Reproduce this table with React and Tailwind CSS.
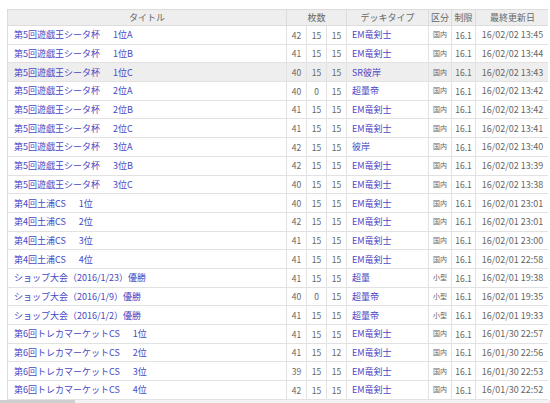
import React from 'react';

const rows = [
  ['第5回遊戯王シータ杯　1位A', 42, 15, 15, 'EM竜剣士', '国内', '16/02/02 13:45'],
  ['第5回遊戯王シータ杯　1位B', 41, 15, 15, 'EM竜剣士', '国内', '16/02/02 13:44'],
  ['第5回遊戯王シータ杯　1位C', 40, 15, 15, 'SR彼岸', '国内', '16/02/02 13:43'],
  ['第5回遊戯王シータ杯　2位A', 40, 0, 15, '超量帝', '国内', '16/02/02 13:42'],
  ['第5回遊戯王シータ杯　2位B', 41, 15, 15, 'EM竜剣士', '国内', '16/02/02 13:42'],
  ['第5回遊戯王シータ杯　2位C', 41, 15, 15, 'EM竜剣士', '国内', '16/02/02 13:41'],
  ['第5回遊戯王シータ杯　3位A', 42, 15, 15, '彼岸', '国内', '16/02/02 13:40'],
  ['第5回遊戯王シータ杯　3位B', 42, 15, 15, 'EM竜剣士', '国内', '16/02/02 13:39'],
  ['第5回遊戯王シータ杯　3位C', 40, 15, 15, 'EM竜剣士', '国内', '16/02/02 13:38'],
  ['第4回土浦CS　1位', 40, 15, 15, 'EM竜剣士', '国内', '16/02/01 23:01'],
  ['第4回土浦CS　2位', 42, 15, 15, 'EM竜剣士', '国内', '16/02/01 23:01'],
  ['第4回土浦CS　3位', 41, 15, 15, 'EM竜剣士', '国内', '16/02/01 23:00'],
  ['第4回土浦CS　4位', 41, 15, 15, 'EM竜剣士', '国内', '16/02/01 22:58'],
  ['ショップ大会（2016/1/23）優勝', 41, 15, 15, '超量', '小型', '16/02/01 19:38'],
  ['ショップ大会（2016/1/9）優勝', 40, 0, 15, '超量帝', '小型', '16/02/01 19:35'],
  ['ショップ大会（2016/1/2）優勝', 41, 15, 15, '超量帝', '小型', '16/02/01 19:33'],
  ['第6回トレカマーケットCS　1位', 41, 15, 15, 'EM竜剣士', '国内', '16/01/30 22:57'],
  ['第6回トレカマーケットCS　2位', 41, 15, 12, 'EM竜剣士', '国内', '16/01/30 22:56'],
  ['第6回トレカマーケットCS　3位', 39, 15, 15, 'EM竜剣士', '国内', '16/01/30 22:53'],
  ['第6回トレカマーケットCS　4位', 42, 15, 15, 'EM竜剣士', '国内', '16/01/30 22:52'],
];

const cols = 'grid grid-cols-[278px_20px_20px_20px_82px_23px_24px_74px]';

function Title({ text }) {
  const [name, rank] = text.split('　');
  return (
    <div className="flex items-center pl-[6px] text-[9px] text-[#4848c4] whitespace-nowrap">
      <span>{name}</span>
      {rank && <span className="ml-[13px]">{rank}</span>}
    </div>
  );
}

export default function App() {
  return (
    <div className="w-[550px] h-[403px] bg-white overflow-hidden relative" style={{ fontFamily: '"Noto Sans CJK JP", "Noto Sans", sans-serif' }}>
      <div className="pt-[9px] pl-[7px]">
        <div className="w-[541px] border-l border-[#dcdcdc]">
          <div className={`${cols} h-[17px] bg-[#eeeeee] border-t border-b border-[#dcdcdc] text-[9px] text-[#666] leading-none`}>
            <div className="flex items-center justify-center">タイトル</div>
            <div className="col-span-3 flex items-center justify-center border-l border-[#dcdcdc]">枚数</div>
            <div className="flex items-center justify-center border-l border-[#dcdcdc]">デッキタイプ</div>
            <div className="flex items-center justify-center border-l border-[#dcdcdc]">区分</div>
            <div className="flex items-center justify-center border-l border-[#dcdcdc]">制限</div>
            <div className="flex items-center justify-center border-l border-[#dcdcdc]">最終更新日</div>
          </div>
          {rows.map((r, i) => (
            <div key={i} className={`${cols} h-[18.7px] border-b border-[#e2e2e2] leading-none ${i === 2 ? 'bg-[#eeeeee]' : 'bg-white'}`}>
              <Title text={r[0]} />
              <div className="flex items-center justify-center border-l border-[#e2e2e2] text-[8.5px] text-[#666]">{r[1]}</div>
              <div className="flex items-center justify-center border-l border-[#e2e2e2] text-[8.5px] text-[#666]">{r[2]}</div>
              <div className="flex items-center justify-center border-l border-[#e2e2e2] text-[8.5px] text-[#666]">{r[3]}</div>
              <div className="flex items-center pl-[5px] border-l border-[#e2e2e2] text-[9px] text-[#4848c4]">{r[4]}</div>
              <div className="flex items-center justify-center border-l border-[#e2e2e2] text-[7px] text-[#666]">{r[5]}</div>
              <div className="flex items-center justify-center border-l border-[#e2e2e2] text-[8.5px] text-[#666]">16.1</div>
              <div className="flex items-center justify-center border-l border-[#e2e2e2] text-[9px] text-[#666] whitespace-nowrap">{r[6]}</div>
            </div>
          ))}
        </div>
      </div>
      <div className="absolute left-0 bottom-0 w-full h-[3px] bg-[#f3f3f3]">
        <div className="w-[75px] h-full bg-[#cfcfcf]" />
      </div>
    </div>
  );
}
